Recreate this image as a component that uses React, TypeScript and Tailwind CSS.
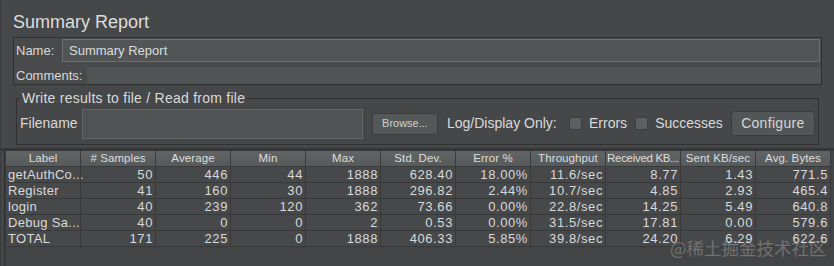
const columns = [
  'Label',
  '# Samples',
  'Average',
  'Min',
  'Max',
  'Std. Dev.',
  'Error %',
  'Throughput',
  'Received KB...',
  'Sent KB/sec',
  'Avg. Bytes',
]

const rows = [
  ['getAuthCo...', '50', '446', '44', '1888', '628.40', '18.00%', '11.6/sec', '8.77', '1.43', '771.5'],
  ['Register', '41', '160', '30', '1888', '296.82', '2.44%', '10.7/sec', '4.85', '2.93', '465.4'],
  ['login', '40', '239', '120', '362', '73.66', '0.00%', '22.8/sec', '14.25', '5.49', '640.8'],
  ['Debug Sa...', '40', '0', '0', '2', '0.53', '0.00%', '31.5/sec', '17.81', '0.00', '579.6'],
  ['TOTAL', '171', '225', '0', '1888', '406.33', '5.85%', '39.8/sec', '24.20', '6.29', '622.6'],
]

const ui = "font-['Liberation_Sans',Arial,sans-serif]"

function Checkbox({ label, className }: { label: string, className?: string }) {
  return (
    <label className={`flex shrink-0 items-center gap-[7px] whitespace-nowrap ${className ?? ''}`}>
      <span className="block h-[13px] w-[13px] rounded-[2px] border border-[#3c3e3f] bg-[#5d6061]" />
      <span>{label}</span>
    </label>
  )
}

export default function App() {
  return (
    <div className={`${ui} relative h-[266px] w-[834px] overflow-hidden border-l border-[#3b3c3d] bg-[#464748] text-[#d9dadb]`}>
      {/* 标题 */}
      <div className="pl-[12px] pt-[9px] text-[18px] leading-[26px] text-[#dcdddd]">Summary Report</div>

      {/* Name / Comments */}
      <div className="ml-[12px] mt-[2px] w-[809px] border border-[#2f3030] bg-[#484a4b] text-[13px]">
        <div className="flex h-[24px] items-center pl-[2px] pr-[1px] pt-[1px]">
          <span className="w-[46px]">Name:</span>
          <div className="flex h-[23px] flex-1 items-center border border-[#6b6e6f] bg-[#515556] pl-[6px] text-[#dcdddd]">
            Summary Report
          </div>
        </div>
        <div className="mt-[5px] flex h-[17px] items-center pl-[2px]">
          <span className="w-[71px]">Comments:</span>
          <div className="h-full flex-1 bg-[#505455]" />
        </div>
      </div>

      {/* Write results to file */}
      <div className="relative ml-[15px] mt-[13px] h-[47px] w-[803px] border border-[#2f3030] text-[14px]">
        <span className="absolute -top-[9px] left-[3px] whitespace-nowrap bg-[#464748] px-[2px] leading-[16px] tracking-[0.25px]">
          Write results to file / Read from file
        </span>
        <div className="flex h-full items-center whitespace-nowrap pl-[3px] pt-[4px]">
          <span className="w-[62px] shrink-0">Filename</span>
          <div className="h-[30px] w-[281px] shrink-0 border border-[#646768] bg-[#4f5354]" />
          <button className="ml-[9px] h-[22px] w-[66px] shrink-0 rounded-[3px] border border-[#3a3c3d] bg-[#555859] text-[11px] text-[#cfd0d0]">
            Browse...
          </button>
          <span className="ml-[9px] w-[122px] shrink-0">Log/Display Only:</span>
          <Checkbox label="Errors" />
          <Checkbox label="Successes" className="ml-[8px]" />
          <button className="ml-[8px] h-[25px] w-[84px] shrink-0 rounded-[3px] border border-[#3a3c3d] bg-[#535657] tracking-[0.3px] text-[#d6d7d7]">
            Configure
          </button>
        </div>
      </div>

      {/* 统计表格 */}
      <div className="mt-[3px] border-t-[3px] border-[#353637] pl-[3px]">
        <div className="border-l border-[#2e2f30] bg-[#434445] pb-[30px]">
          <table className="w-[825px] table-fixed border-collapse text-[13px]">
            <thead>
              <tr className="h-[15px] bg-gradient-to-b from-[#626566] to-[#575a5b]">
                {columns.map(c => (
                  <th key={c} className="w-[75px] overflow-hidden whitespace-nowrap border-x border-b border-[#3a3b3c] p-0 text-center text-[11.5px] font-normal leading-[14px] tracking-[0.1px] text-[#dddede] last:tracking-[0.1px] [&:nth-child(9)]:tracking-[-0.3px]">
                    {c}
                  </th>
                ))}
              </tr>
            </thead>
            <tbody>
              {rows.map(r => (
                <tr key={r[0]} className="h-[16px] bg-[#474849]">
                  {r.map((v, i) => (
                    <td
                      key={i}
                      className={
                        i === 0
                          ? 'border border-[#37393a] p-0 pl-[2px] text-left leading-[15px] tracking-[0.3px]'
                          : 'border border-[#37393a] p-0 pr-[2px] text-right leading-[15px] tracking-[0.6px]'
                      }
                    >
                      {v}
                    </td>
                  ))}
                </tr>
              ))}
            </tbody>
          </table>
        </div>
      </div>

      {/* 水印 */}
      <div className="absolute left-[669px] top-[237px] whitespace-nowrap font-['Noto_Sans_CJK_SC',sans-serif] text-[17.5px] leading-[22px] text-white/25">
        @稀土掘金技术社区
      </div>
    </div>
  )
}
